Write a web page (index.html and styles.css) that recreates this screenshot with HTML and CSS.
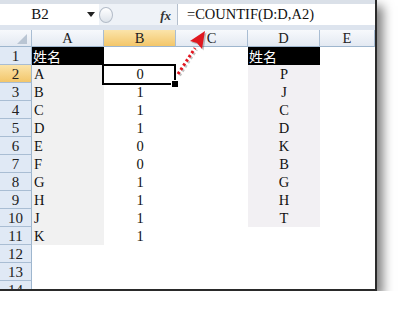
FILE: index.html
```html
<!DOCTYPE html>
<html lang="zh">
<head>
  <meta charset="UTF-8" />
  <title>COUNTIF</title>
  <link rel="stylesheet" href="styles.css">
</head>
<body>
  <div class="window">
    <div class="ribbon-edge"></div>

    <div class="formula-bar">
      <div class="name-box"><span class="name">B2</span><span class="caret"></span></div>
      <div class="grip"></div>
      <div class="fx-zone"><span class="fx">fx</span></div>
      <div class="formula">=COUNTIF(D:D,A2)</div>
    </div>
    <div class="gap-strip"></div>

    <div class="sheet">
      <!-- header row -->
      <div class="hd corner"><svg width="10" height="10" viewBox="0 0 10 10"><polygon points="10,0 10,10 0,10" fill="#b9c5d3"/></svg></div>
      <div class="hd">A</div><div class="hd on">B</div><div class="hd">C</div><div class="hd">D</div><div class="hd">E</div>

      <div class="rh">1</div><div class="c title">姓名</div><div class="c"></div><div class="c"></div><div class="c title">姓名</div><div class="c"></div>
      <div class="rh on">2</div><div class="c ga">A</div><div class="c mid active">0</div><div class="c"></div><div class="c mid gd">P</div><div class="c"></div>
      <div class="rh">3</div><div class="c ga">B</div><div class="c mid">1</div><div class="c"></div><div class="c mid gd">J</div><div class="c"></div>
      <div class="rh">4</div><div class="c ga">C</div><div class="c mid">1</div><div class="c"></div><div class="c mid gd">C</div><div class="c"></div>
      <div class="rh">5</div><div class="c ga">D</div><div class="c mid">1</div><div class="c"></div><div class="c mid gd">D</div><div class="c"></div>
      <div class="rh">6</div><div class="c ga">E</div><div class="c mid">0</div><div class="c"></div><div class="c mid gd">K</div><div class="c"></div>
      <div class="rh">7</div><div class="c ga">F</div><div class="c mid">0</div><div class="c"></div><div class="c mid gd">B</div><div class="c"></div>
      <div class="rh">8</div><div class="c ga">G</div><div class="c mid">1</div><div class="c"></div><div class="c mid gd">G</div><div class="c"></div>
      <div class="rh">9</div><div class="c ga">H</div><div class="c mid">1</div><div class="c"></div><div class="c mid gd">H</div><div class="c"></div>
      <div class="rh">10</div><div class="c ga">J</div><div class="c mid">1</div><div class="c"></div><div class="c mid gd">T</div><div class="c"></div>
      <div class="rh">11</div><div class="c ga">K</div><div class="c mid">1</div><div class="c"></div><div class="c"></div><div class="c"></div>
      <div class="rh">12</div><div class="c"></div><div class="c"></div><div class="c"></div><div class="c"></div><div class="c"></div>
      <div class="rh">13</div><div class="c"></div><div class="c"></div><div class="c"></div><div class="c"></div><div class="c"></div>
      <div class="rh">14</div><div class="c"></div><div class="c"></div><div class="c"></div><div class="c"></div><div class="c"></div>
    </div>

    <!-- red dotted pointer from B2 to the formula -->
    <svg class="pointer" width="377" height="291" viewBox="0 0 377 291">
      <g transform="translate(1.5,1.5)" opacity="0.35">
        <line x1="178" y1="74" x2="195" y2="48" stroke="#555" stroke-width="3" stroke-dasharray="2.5 2.5"/>
        <polygon points="205,31 190,41 197,43 202,49" fill="#555"/>
      </g>
      <line x1="178" y1="74" x2="195" y2="48" stroke="#e3151f" stroke-width="3" stroke-dasharray="2.5 2.5"/>
      <polygon points="205,31 190,41 197,43 202,49" fill="#e01820"/>
    </svg>
  </div>
</body>
</html>
```

FILE: styles.css
```css
* { box-sizing: border-box; }

body {
  margin: 0;
  background: #fff;
  font-family: "Liberation Serif", "Noto Sans CJK SC", serif;
  color: #111;
}

.window {
  position: relative;
  width: 377px;
  height: 291px;
  display: flex;
  flex-direction: column;
  overflow: hidden;
  background: #fff;
  border-right: 2px solid #2a2a2a;
  border-bottom: 2px solid #2a2a2a;
  box-shadow: 6px 6px 10px rgba(0, 0, 0, 0.5);
}

.ribbon-edge {
  flex: none;
  height: 4px;
  background: #dae0e8;
}

/* FORMULA BAR */
.formula-bar {
  flex: none;
  height: 21px;
  display: flex;
  align-items: center;
  background: #eef2f7;
}

.name-box {
  width: 99px;
  height: 100%;
  display: flex;
  align-items: center;
  background: #fff;
}

.name-box .name {
  width: 80px;
  text-align: center;
  font-size: 15px;
}

.caret {
  width: 0;
  height: 0;
  margin-left: 7px;
  border-left: 4px solid transparent;
  border-right: 4px solid transparent;
  border-top: 5px solid #222;
}

.grip {
  width: 14px;
  height: 16px;
  border-radius: 50%;
  border: 1px solid #b3bcc8;
  background: linear-gradient(#ffffff, #dde3ea);
}

.fx-zone {
  width: 64px;
  text-align: right;
  padding-right: 6px;
}

.fx {
  font: italic bold 13px "Liberation Serif", serif;
  color: #333;
}

.formula {
  flex: 1;
  height: 100%;
  background: #fff;
  border-left: 1px solid #b4bfcd;
  padding-left: 9px;
  font-size: 14.5px;
  line-height: 21px;
}

.gap-strip {
  flex: none;
  height: 5px;
  background: #dde4ee;
}

/* SHEET GRID */
.sheet {
  display: grid;
  grid-template-columns: 32px 72px 72px 72px 72px 1fr;
  grid-template-rows: 17px;
  grid-auto-rows: 18px;
  font-size: 14.5px;
}

.hd {
  background: linear-gradient(#f7f9fc, #e3e9f2);
  border-right: 1px solid #a9bdd3;
  border-bottom: 1px solid #9eb6ce;
  text-align: center;
  line-height: 17px;
  color: #222;
}

.hd.corner {
  display: flex;
  justify-content: flex-end;
  align-items: flex-end;
  padding: 0 4px 2px 0;
}

.hd.on,
.rh.on {
  background: linear-gradient(#fbe4aa, #f3c66a);
}

.rh {
  background: #e0e9f5;
  border-right: 1px solid #9eb6ce;
  border-bottom: 1px solid #a9bdd3;
  text-align: center;
  line-height: 18px;
  font-size: 15px;
  color: #222;
}

.c {
  line-height: 18px;
  padding-left: 2px;
  white-space: nowrap;
}

.c.mid {
  text-align: center;
  padding: 0;
}

.c.title {
  background: #000;
  color: #fff;
  font-family: "Noto Sans CJK SC", sans-serif;
  font-size: 14px;
  padding-left: 1px;
}

.c.ga { background: #f1f1f1; }
.c.gd { background: #f2f0f3; }

/* active cell outline and fill handle */
.c.active { position: relative; }

.c.active::after {
  content: "";
  position: absolute;
  left: -2px;
  top: -1px;
  right: 0;
  bottom: -2px;
  border: 2px solid #000;
}

.c.active::before {
  content: "";
  position: absolute;
  right: -3px;
  bottom: -5px;
  width: 6px;
  height: 6px;
  background: #000;
  border: 1px solid #fff;
  z-index: 1;
}

.pointer {
  position: absolute;
  left: 0;
  top: 0;
  pointer-events: none;
}
```
